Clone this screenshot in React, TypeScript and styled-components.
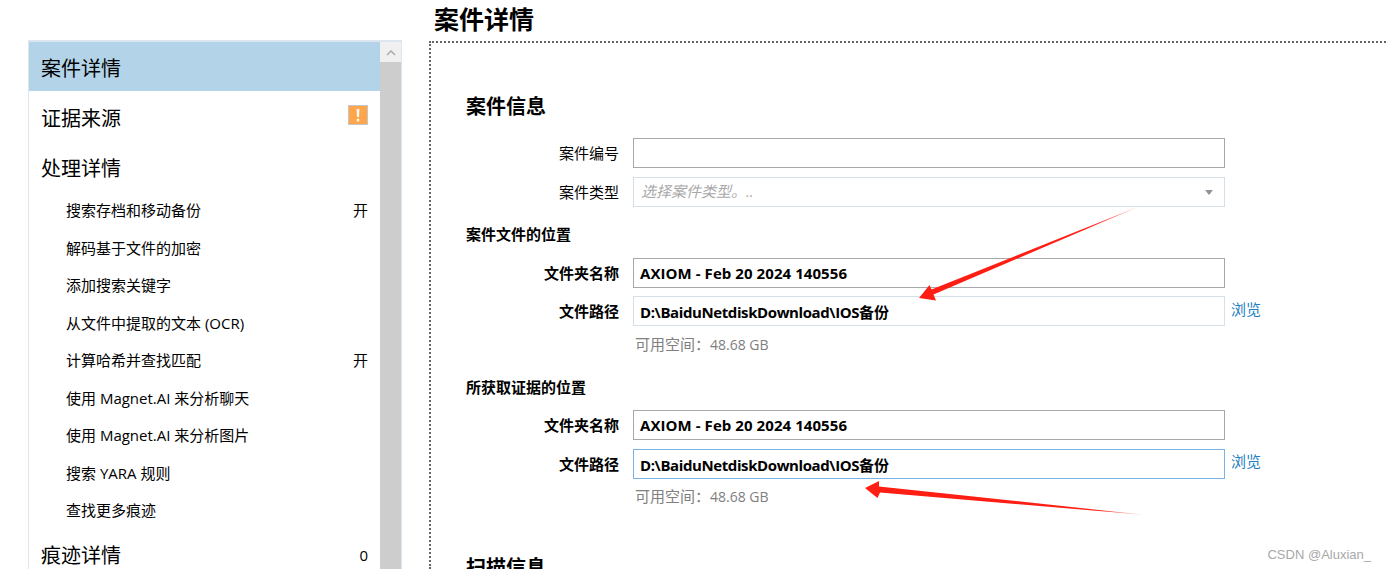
import React from "react";
import styled, { createGlobalStyle } from "styled-components";

const Global = createGlobalStyle`
  html, body { margin: 0; padding: 0; background: #fff; overflow: hidden; }
  body { font-family: "Open Sans", "Noto Sans CJK SC", sans-serif; color: #000; }
  #root { height: 569px; overflow: hidden; }
`;

const Page = styled.div`
  position: relative;
  width: 1386px;
  height: 569px;
  overflow: hidden;
  display: flex;
  align-items: flex-start;
  padding-left: 28px;
  box-sizing: border-box;
`;

const Sidebar = styled.aside`
  flex: none;
  width: 374px;
  height: 529px;
  margin-top: 40px;
  box-sizing: border-box;
  border: solid #dde6ee;
  border-width: 2px 1px 0 1px;
  display: flex;
  overflow: hidden;
`;

const NavList = styled.nav`
  flex: 1;
  display: flex;
  flex-direction: column;
  min-width: 0;
`;

const NavHead = styled.div<{ $active?: boolean }>`
  flex: none;
  height: ${(p) => (p.$active ? 49 : 50)}px;
  margin-bottom: ${(p) => (p.$active ? 1 : 0)}px;
  box-sizing: border-box;
  padding: ${(p) => (p.$active ? 2 : 0)}px 12px 0;
  display: flex;
  align-items: center;
  justify-content: space-between;
  font-size: 20px;
  background: ${(p) => (p.$active ? "#b3d4e8" : "transparent")};
`;

const NavSub = styled.div`
  flex: none;
  height: 37.5px;
  box-sizing: border-box;
  padding: 0 12px 0 37px;
  display: flex;
  align-items: center;
  justify-content: space-between;
  font-size: 15px;
`;

const NavGroup = styled.div`
  display: flex;
  flex-direction: column;
  margin-top: -1px;
  padding-bottom: 1px;
`;

const Count = styled.span`
  font-size: 15px;
`;

const Warn = styled.span`
  width: 20px;
  height: 20px;
  box-sizing: border-box;
  border: 1px solid #c6c6c6;
  background: #ffa64d;
  display: flex;
  align-items: center;
  justify-content: center;
  margin-bottom: 4px;
`;

const Scrollbar = styled.div`
  flex: none;
  width: 21px;
  background: #cdcdcd;
`;

const ScrollUp = styled.div`
  height: 20px;
  background: #f0f0f0;
  display: flex;
  align-items: center;
  justify-content: center;
`;

const Main = styled.main`
  flex: 1;
  min-width: 0;
  margin-left: 27px;
  display: flex;
  flex-direction: column;
`;

const Title = styled.h1`
  margin: 0;
  height: 41px;
  padding: 2px 0 0 5px;
  box-sizing: border-box;
  font-size: 25px;
  line-height: 34px;
  font-weight: 700;
`;

const Panel = styled.section`
  border: dotted #666;
  border-width: 2px 0 0 2px;
  padding: 46px 0 0 35px;
  height: 528px;
  box-sizing: border-box;
`;

const SectionTitle = styled.h2<{ $top?: number }>`
  margin: ${(p) => p.$top ?? 0}px 0 0;
  font-size: 20px;
  line-height: 36px;
  height: 36px;
  font-weight: 700;
`;

const GroupTitle = styled.h3<{ $top: number }>`
  margin: ${(p) => p.$top}px 0 0;
  font-size: 15px;
  line-height: 20px;
  height: 20px;
  font-weight: 700;
`;

const Row = styled.div<{ $top: number }>`
  display: flex;
  align-items: center;
  margin-top: ${(p) => p.$top}px;
`;

const Label = styled.label<{ $bold?: boolean }>`
  flex: none;
  width: 153px;
  padding-bottom: 2px;
  text-align: right;
  font-size: 15px;
  font-weight: ${(p) => (p.$bold ? 700 : 400)};
`;

const Field = styled.div<{ $tone: "gray" | "pale" | "focus" }>`
  flex: none;
  width: 592px;
  height: 30px;
  margin-left: 14px;
  box-sizing: border-box;
  border: 1px solid
    ${(p) => (p.$tone === "gray" ? "#a8a8a8" : p.$tone === "pale" ? "#d5e0e8" : "#7ab2e6")};
  padding: 0 6px;
  display: flex;
  align-items: center;
  justify-content: space-between;
  font-size: 15px;
  font-weight: 700;
  white-space: nowrap;
`;

const PathText = styled.span`
  letter-spacing: -0.4px;
`;

const NameText = styled.span`
  letter-spacing: 0.07px;
  margin-bottom: 1px;
`;

const PathSuffix = styled.span`
  letter-spacing: 0;
`;

const Placeholder = styled.span`
  font-size: 15px;
  font-weight: 400;
  font-style: italic;
  color: #a9a9a9;
  margin: 0 0 3px 1px;
`;

const Caret = styled.span`
  width: 0;
  height: 0;
  margin-right: 5px;
  border-left: 4px solid transparent;
  border-right: 4px solid transparent;
  border-top: 5px solid #8d949a;
`;

const Browse = styled.a<{ $lift: number }>`
  margin: -${(p) => p.$lift}px 0 0 6px;
  font-size: 15px;
  color: #1f7fbf;
`;

const Free = styled.div<{ $top: number }>`
  margin: ${(p) => p.$top}px 0 0 169px;
  font-size: 15px;
  line-height: 20px;
  color: #808080;
`;

const FreeValue = styled.span`
  font-size: 14px;
`;

const Arrows = styled.svg`
  position: absolute;
  left: 0;
  top: 0;
  pointer-events: none;
`;

const Watermark = styled.div`
  position: absolute;
  right: 15px;
  bottom: 7px;
  font-family: "Liberation Sans", sans-serif;
  font-size: 13px;
  color: #a8a8a8;
`;

const subs: { text: string; state?: string }[] = [
  { text: "搜索存档和移动备份", state: "开" },
  { text: "解码基于文件的加密" },
  { text: "添加搜索关键字" },
  { text: "从文件中提取的文本 (OCR)" },
  { text: "计算哈希并查找匹配", state: "开" },
  { text: "使用 Magnet.AI 来分析聊天" },
  { text: "使用 Magnet.AI 来分析图片" },
  { text: "搜索 YARA 规则" },
  { text: "查找更多痕迹" },
];

const FolderName = () => <NameText>AXIOM - Feb 20 2024 140556</NameText>;
const FolderPath = () => (
  <PathText>
    D:\BaiduNetdiskDownload\IOS<PathSuffix>备份</PathSuffix>
  </PathText>
);
const FreeSpace = ({ top }: { top: number }) => (
  <Free $top={top}>
    可用空间：<FreeValue>48.68 GB</FreeValue>
  </Free>
);

export default function App() {
  return (
    <Page>
      <Global />
      <Sidebar>
        <NavList>
          <NavHead $active>案件详情</NavHead>
          <NavHead>
            证据来源
            <Warn>
              <svg width="4" height="13" viewBox="0 0 4 13">
                <path d="M0.6 0h2.8L3 8H1z" fill="#fff" />
                <rect x="0.8" y="9.8" width="2.4" height="2.6" fill="#fff" />
              </svg>
            </Warn>
          </NavHead>
          <NavHead>处理详情</NavHead>
          <NavGroup>
            {subs.map((s) => (
              <NavSub key={s.text}>
                <span>{s.text}</span>
                {s.state && <Count>{s.state}</Count>}
              </NavSub>
            ))}
          </NavGroup>
          <NavHead>
            痕迹详情
            <Count>0</Count>
          </NavHead>
        </NavList>
        <Scrollbar>
          <ScrollUp>
            <svg width="10" height="7" viewBox="0 0 10 7">
              <path d="M1 6l4-4 4 4" fill="none" stroke="#a6a6a6" strokeWidth="1.4" />
            </svg>
          </ScrollUp>
        </Scrollbar>
      </Sidebar>
      <Main>
        <Title>案件详情</Title>
        <Panel>
          <SectionTitle>案件信息</SectionTitle>
          <Row $top={13}>
            <Label>案件编号</Label>
            <Field $tone="gray" />
          </Row>
          <Row $top={9}>
            <Label>案件类型</Label>
            <Field $tone="pale">
              <Placeholder>选择案件类型。..</Placeholder>
              <Caret />
            </Field>
          </Row>
          <GroupTitle $top={17}>案件文件的位置</GroupTitle>
          <Row $top={14}>
            <Label $bold>文件夹名称</Label>
            <Field $tone="gray">
              <FolderName />
            </Field>
          </Row>
          <Row $top={8}>
            <Label $bold>文件路径</Label>
            <Field $tone="pale">
              <FolderPath />
            </Field>
            <Browse $lift={6}>浏览</Browse>
          </Row>
          <FreeSpace top={8} />
          <GroupTitle $top={22}>所获取证据的位置</GroupTitle>
          <Row $top={13}>
            <Label $bold>文件夹名称</Label>
            <Field $tone="gray">
              <FolderName />
            </Field>
          </Row>
          <Row $top={9}>
            <Label $bold>文件路径</Label>
            <Field $tone="focus">
              <FolderPath />
            </Field>
            <Browse $lift={8}>浏览</Browse>
          </Row>
          <FreeSpace top={7} />
          <SectionTitle $top={43}>扫描信息</SectionTitle>
        </Panel>
      </Main>
      <Arrows width="1386" height="569" viewBox="0 0 1386 569">
        <defs>
          <linearGradient id="fadeA" gradientUnits="userSpaceOnUse" x1="1139" y1="206" x2="1085" y2="229">
            <stop offset="0" stopColor="#ff1e14" stopOpacity="0.5" />
            <stop offset="1" stopColor="#ff1e14" />
          </linearGradient>
          <linearGradient id="fadeB" gradientUnits="userSpaceOnUse" x1="1146" y1="515" x2="1095" y2="510">
            <stop offset="0" stopColor="#ff1e14" stopOpacity="0.3" />
            <stop offset="1" stopColor="#ff1e14" />
          </linearGradient>
        </defs>
        <path d="M1139 206.5L933.5 294.5L936 300.5L919 298L929.5 285L931.5 289.5Z" fill="url(#fadeA)" />
        <path d="M1146 515L880 492.5L877.5 498L865 488L879 481L879 486.5Z" fill="url(#fadeB)" />
      </Arrows>
      <Watermark>CSDN @Aluxian_</Watermark>
    </Page>
  );
}
